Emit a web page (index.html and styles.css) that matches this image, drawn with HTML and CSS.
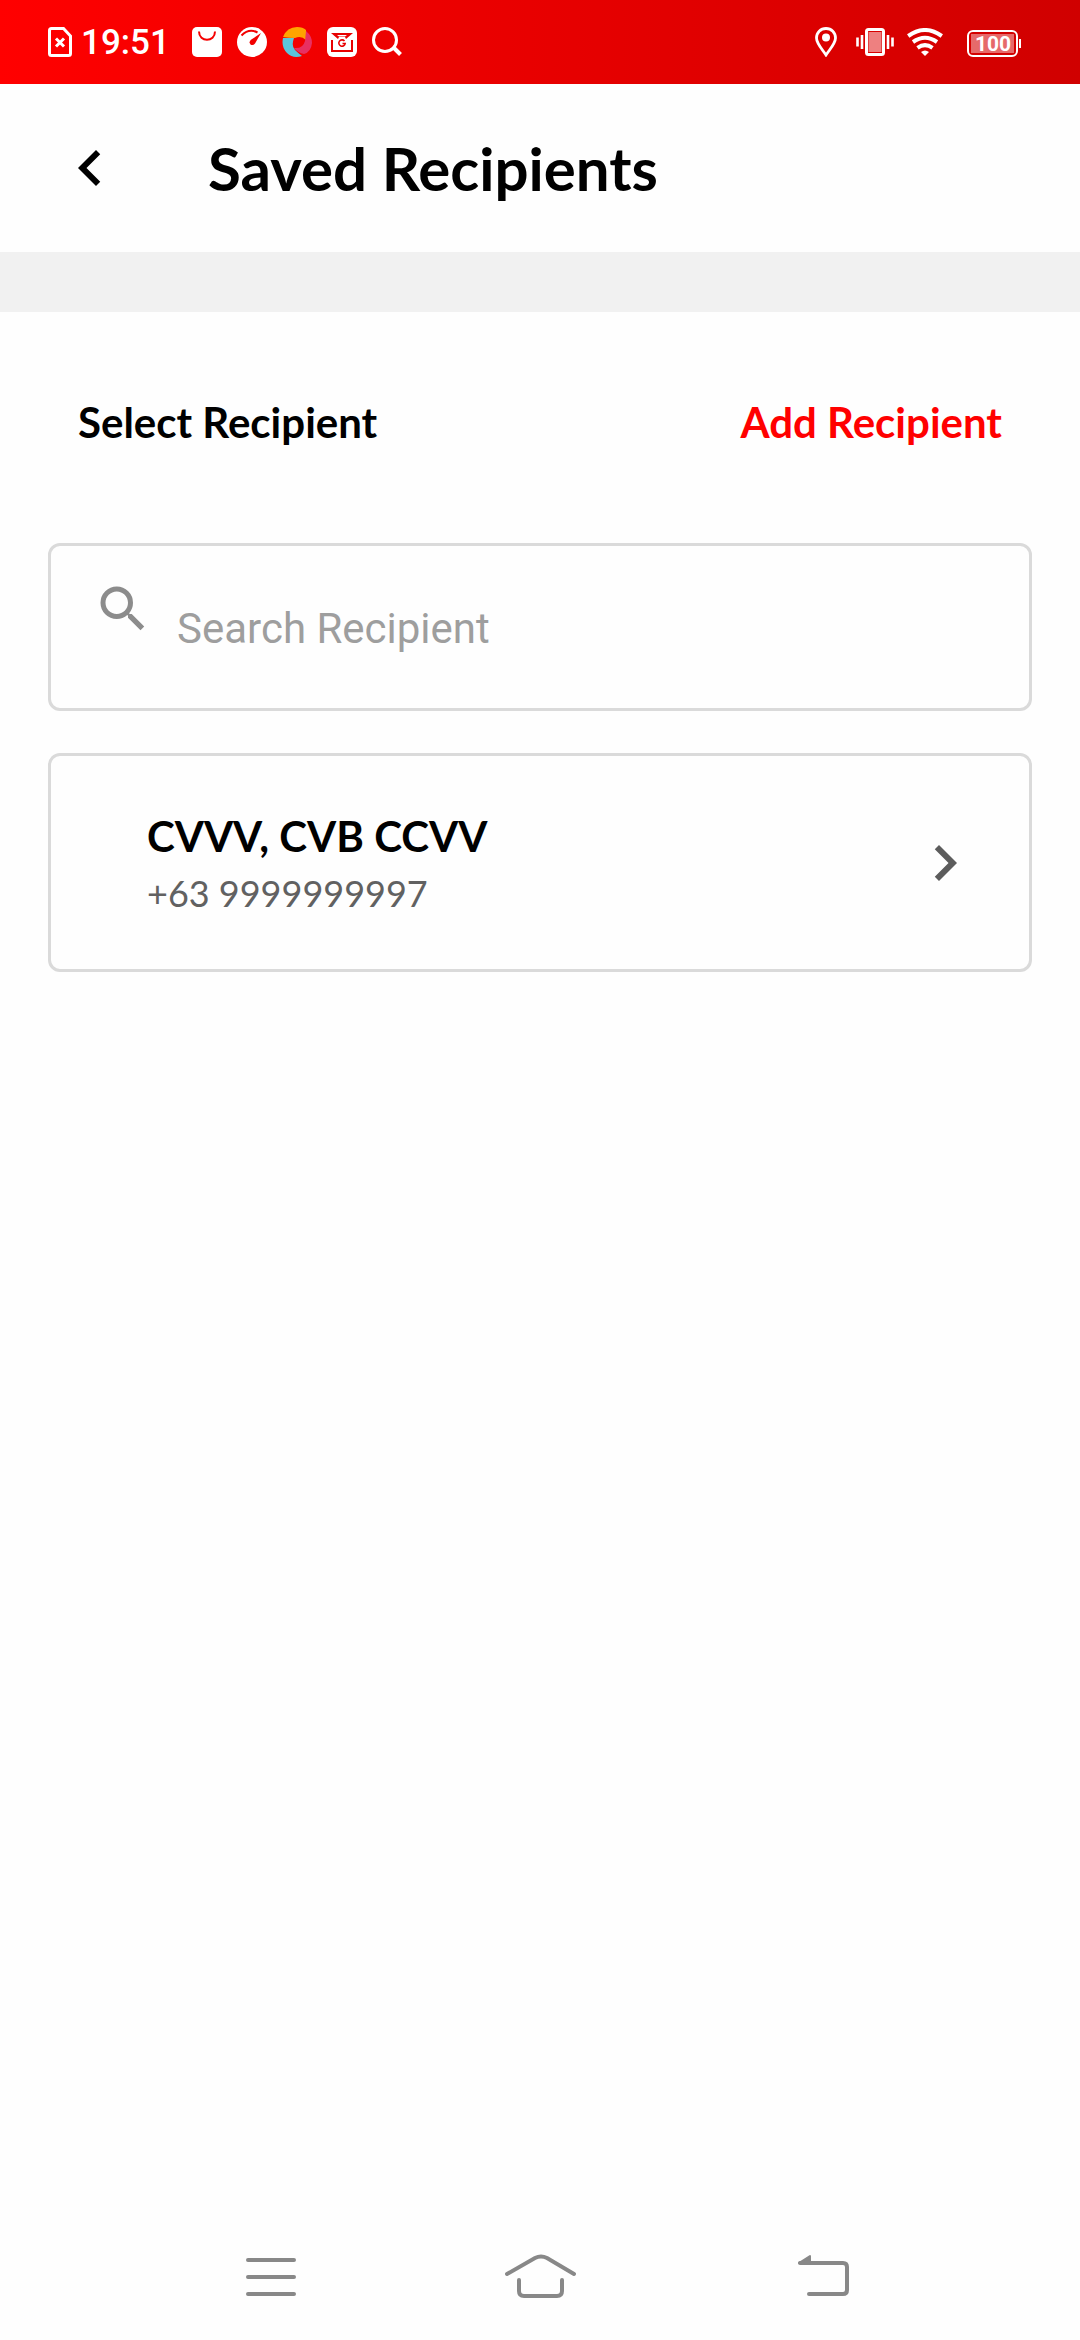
FILE: index.html
```html
<!DOCTYPE html>
<html lang="en">
<head>
<meta charset="utf-8">
<meta name="viewport" content="width=device-width, initial-scale=1">
<title>Saved Recipients</title>
<link rel="stylesheet" href="styles.css">
</head>
<body>
<div class="screen">
  <div class="status">
    <div class="status-left">
      <svg class="sim" width="24" height="30" viewBox="0 0 24 30" fill="none" stroke="#fff" stroke-width="3"><path d="M3.500 1.500H15.500L22.500 9V26.500Q22.500 28.500 20.500 28.500H3.500Q1.500 28.500 1.500 26.500V3.500Q1.500 1.500 3.500 1.500Z"/><path d="M8 11.500L16 19.500M16 11.500L8 19.500"/></svg>
      <span class="time">19:51</span>
      <div class="apps">
        <svg width="30" height="30" viewBox="0 0 30 30"><rect width="30" height="30" rx="5" fill="#fff"/><path d="M7 4.500C7 15.500 23 15.500 23 4.500" fill="none" stroke="#f50000" stroke-width="2"/></svg>
        <svg width="30" height="30" viewBox="0 0 30 30"><circle cx="15" cy="15" r="15" fill="#fff"/><path d="M4.500 8.500Q12 1 20.500 5.500" fill="none" stroke="#f20000" stroke-width="2"/><path d="M24 6L18 16.500Q16 19 13.500 17.500Q11.500 15 14 12.800Z" fill="#f20000"/></svg>
        <svg width="30" height="30" viewBox="0 0 30 30"><path d="M1 10Q5 0 15 0Q21 0 24 3V13Q19 8 13 11Q7 11 1 10Z" fill="#ffa400"/><path d="M24 4Q30 9 30 16Q29 25 22 27Q16 26 12 21Q21 22 23 14Z" fill="#e83062"/><path d="M1 11H12Q9 19 13 23Q16 26 20 29Q11 32 5 26Q-1 20 1 11Z" fill="#5bc4dc"/></svg>
        <svg width="30" height="30" viewBox="0 0 30 30"><rect width="30" height="30" rx="6" fill="#fff"/><g fill="none" stroke="#e80000" stroke-width="2"><path d="M5 13V24H25V13M10 9H20"/><path d="M17.500 14A3.200 3.200 0 1 0 18.200 16.500H15.500" stroke-width="1.600"/></g><path d="M4 6H26L19 12L18 10H12L11 12Z" fill="#e80000"/><path d="M10 8H20L18 9.500H12Z" fill="#fff"/></svg>
        <svg width="30" height="30" viewBox="0 0 30 30" fill="none" stroke="#fff" stroke-width="3"><circle cx="13" cy="13" r="11.500"/><path d="M21 20L28.500 27.500" stroke-width="4"/></svg>
      </div>
    </div>
    <div class="status-right">
      <svg width="22" height="30" viewBox="0 0 22 30"><path d="M11 1.500C5.500 1.500 1.500 5.500 1.500 11C1.500 16.500 7 22 11 28C15 22 20.500 16.500 20.500 11C20.500 5.500 16.500 1.500 11 1.500Z" fill="none" stroke="#fff" stroke-width="2.800"/><circle cx="11" cy="10.500" r="4" fill="#fff"/></svg>
      <svg class="vibrate" width="38" height="28" viewBox="0 0 38 28"><rect x="12.500" y="4" width="13" height="20" fill="#ee8080"/><rect x="10.500" y="1.500" width="17" height="25" rx="2" fill="none" stroke="#fff" stroke-width="3"/><path d="M1.500 9.500V18.500M6 7V21M32 7V21M36.500 9.500V18.500" stroke="#fff" stroke-width="2.600"/></svg>
      <svg class="wifi" width="36" height="28" viewBox="0 0 36 28" fill="none" stroke="#fff" stroke-width="4"><path d="M1.200 8Q18 -4 34.800 8M6 14Q18 5.500 30 14M10.500 19.800Q18 14.500 25.500 19.800"/><path d="M14 24Q18 21 22 24L18 28Z" fill="#fff" stroke="none"/></svg>
      <div class="battery"><span class="level">100</span></div>
    </div>
  </div>

  <header class="header">
    <button class="back" type="button" aria-label="Back">
      <svg width="72" height="72" viewBox="0 0 24 24"><path d="M15.410 7.410L14 6L8 12L14 18L15.410 16.590L10.830 12Z" fill="#000"/></svg>
    </button>
    <h1 class="title">Saved Recipients</h1>
  </header>

  <main class="main">
    <div class="toolbar">
      <h2 class="subtitle">Select Recipient</h2>
      <a class="add" href="#add">Add Recipient</a>
    </div>
    <label class="search">
      <svg class="search-icon" width="60" height="60" viewBox="0 0 24 24" aria-label="Search"><path fill="#8c8c8c" d="M15.500 14h-.79l-.28-.27A6.471 6.471 0 0 0 16 9.500 6.500 6.500 0 1 0 9.500 16c1.610 0 3.090-.59 4.230-1.570l.27.28v.79l5 4.990L20.490 19l-4.990-5zm-6 0C7.010 14 5 11.990 5 9.500S7.010 5 9.500 5 14 7.010 14 9.500 11.990 14 9.500 14z"/></svg>
      <input class="search-input" type="text" placeholder="Search Recipient">
    </label>
    <button class="card" type="button">
      <span class="person">
        <span class="name">CVVV, CVB CCVV</span>
        <span class="phone">+63 9999999997</span>
      </span>
      <svg width="72" height="72" viewBox="0 0 24 24"><path d="M10 6L8.590 7.410L13.170 12L8.590 16.590L10 18L16 12Z" fill="#5c5c5c"/></svg>
    </button>
  </main>

  <nav class="nav">
    <button class="nav-button" type="button" aria-label="Recent apps">
      <svg width="96" height="60" viewBox="0 0 96 60" fill="none" stroke="#888" stroke-width="4" stroke-linecap="round"><path d="M26 13H72M26 30H72M26 47H72"/></svg>
    </button>
    <button class="nav-button" type="button" aria-label="Home">
      <svg width="96" height="60" viewBox="0 0 96 60" fill="none" stroke="#888" stroke-width="4" stroke-linecap="round"><path d="M15 27L43 11Q49 8 55 11L82 27"/><path d="M27 33V44Q27 49 32 49H65Q70 49 70 44V33"/></svg>
    </button>
    <button class="nav-button" type="button" aria-label="Go back">
      <svg width="96" height="60" viewBox="0 0 96 60" fill="none" stroke="#888" stroke-width="4" stroke-linecap="round"><path d="M38 16H81Q85 16 85 20V43Q85 47 81 47H47"/><path d="M37 16L48 9V16Z" fill="#888" stroke-width="2" stroke-linejoin="round"/></svg>
    </button>
  </nav>
</div>
</body>
</html>
```
FILE: styles.css
```css
* {
  box-sizing: border-box;
}

body {
  margin: 0;
  background: #fefefe;
  color: #000;
  font-family: Lato, "Liberation Sans", sans-serif;
}

button {
  padding: 0;
  border: 0;
  background: none;
  color: inherit;
  font: inherit;
}

svg {
  display: block;
  flex: none;
}

.screen {
  display: flex;
  flex-direction: column;
  min-height: 100vh;
}

.status {
  display: flex;
  justify-content: space-between;
  align-items: center;
  height: 84px;
  padding: 0 59px 0 48px;
  background: linear-gradient(90deg, #ff0000, #d00000);
  color: #fff;
  font-family: Roboto, sans-serif;
}

.status-left,
.status-right,
.apps {
  display: flex;
  align-items: center;
}

.time {
  width: 108px;
  margin-left: 9px;
  padding-top: 2px;
  font-size: 35px;
  font-weight: 500;
  line-height: 42px;
}

.apps {
  margin-left: 3px;
  gap: 15px;
}

.vibrate {
  margin-left: 19px;
}

.wifi {
  margin-left: 13px;
}

.battery {
  position: relative;
  width: 51px;
  height: 27px;
  margin: 2px 3px 0 24px;
  padding: 2px;
  border: 2px solid #fff;
  border-radius: 6px;
}

.battery::after {
  content: "";
  position: absolute;
  top: 7px;
  right: -5px;
  width: 2px;
  height: 9px;
  background: #fff;
}

.level {
  display: block;
  height: 19px;
  padding-left: 1px;
  background: #e66a6a;
  font-size: 21px;
  font-weight: 700;
  line-height: 20px;
  text-align: center;
}

.header {
  display: flex;
  align-items: center;
  gap: 82px;
  height: 168px;
  padding: 0 54px;
}

.title {
  margin: 0;
  font-size: 60px;
  font-weight: 700;
  line-height: 72px;
}

.main {
  flex: 1;
  padding: 0 48px;
  border-top: 60px solid #f1f1f1;
}

.toolbar {
  display: flex;
  justify-content: space-between;
  padding: 85px 30px 96px;
  font-size: 42px;
  font-weight: 700;
  line-height: 50px;
}

.subtitle {
  margin: 0;
  font: inherit;
}

.add {
  color: #ff0000;
  text-decoration: none;
}

.search,
.card {
  display: flex;
  align-items: center;
  width: 100%;
  border: 3px solid #dadada;
  border-radius: 12px;
}

.search {
  gap: 24px;
  height: 168px;
  padding: 0 42px;
}

.search-icon {
  align-self: flex-start;
  margin-top: 33px;
}

.search-input {
  flex: 1;
  min-width: 0;
  padding: 4px 0 0;
  border: 0;
  outline: 0;
  background: none;
  font-family: Roboto, sans-serif;
  font-size: 42px;
  line-height: 50px;
}

.search-input::placeholder {
  color: #9e9e9e;
  opacity: 1;
}

.card {
  justify-content: space-between;
  margin-top: 42px;
  padding: 55px 48px 54px 96px;
  text-align: left;
}

.person {
  display: flex;
  flex-direction: column;
  gap: 10px;
}

.name {
  font-size: 42px;
  font-weight: 700;
  line-height: 50px;
}

.phone {
  color: #616161;
  font-size: 36px;
  line-height: 44px;
}

.nav {
  display: grid;
  grid-template-columns: repeat(3, 1fr);
  align-items: center;
  height: 126px;
  padding: 0 12.5%;
}

.nav-button {
  justify-self: center;
}
```
